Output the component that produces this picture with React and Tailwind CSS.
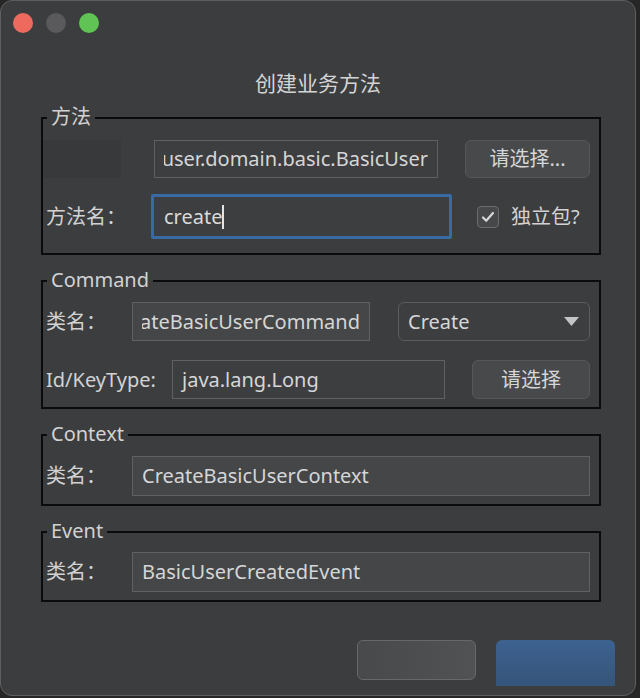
import React from 'react';

const FONT = { fontFamily: '"Noto Sans", "Noto Sans CJK SC", sans-serif' };

function Group({ title, className, children }) {
  return (
    <div className={`relative ml-[40px] w-[560px] border-2 border-[#0b0b0b] ${className}`}>
      <span className="absolute -top-[14px] left-[4px] bg-[#3c3d3f] px-[4px] text-[20px] leading-[24px] text-[#d2d2d2]">
        {title}
      </span>
      {children}
    </div>
  );
}

function Field({ value, className, clip = false }) {
  return (
    <div className={`flex items-center border border-[#5f6163] px-[9px] text-[20px] text-[#d6d6d6] ${className}`}>
      {clip ? (
        <div className="flex min-w-0 flex-1 justify-end overflow-hidden whitespace-nowrap">
          <span>{value}</span>
        </div>
      ) : (
        <span className="whitespace-nowrap">{value}</span>
      )}
    </div>
  );
}

function Button({ children, className }) {
  return (
    <div className={`flex items-center justify-center rounded-[6px] border border-[#55575a] bg-[#47494b] text-[20px] text-[#d6d6d6] ${className}`}>
      {children}
    </div>
  );
}

export default function App() {
  return (
    <div className="h-[698px] w-[640px] bg-[#262626]" style={FONT}>
      <div className="flex h-[696px] w-[636px] flex-col overflow-hidden rounded-[12px] border border-[#5e5e5e] bg-[#3c3d3f]">
        {/* traffic lights */}
        <div className="flex gap-[13px] pl-[12px] pt-[12px]">
          <span className="h-[20px] w-[20px] rounded-full bg-[#ee6a5f]" />
          <span className="h-[20px] w-[20px] rounded-full bg-[#5a5a5c]" />
          <span className="h-[20px] w-[20px] rounded-full bg-[#5fc453]" />
        </div>

        <div className="mt-[36px] text-center text-[21px] leading-[28px] text-[#d4d4d4]">创建业务方法</div>

        {/* 方法 */}
        <Group title="方法" className="mt-[20px] pb-[14px] pt-[21px]">
          <div className="flex items-center">
            <div className="h-[38px] w-[78px] bg-[#38393b]" />
            <Field
              clip
              value="com.xxx.user.domain.basic.BasicUser"
              className="ml-[33px] h-[38px] w-[284px] bg-[#3d3e40]"
            />
            <Button className="ml-[27px] h-[38px] w-[125px]">请选择...</Button>
          </div>
          <div className="mt-[16px] flex items-center">
            <div className="ml-[3px] w-[105px] text-[20px] text-[#d2d2d2]">方法名：</div>
            <div className="flex h-[45px] w-[301px] items-center rounded-[2px] border-[3px] border-[#3a6aa3] bg-[#3d3e40] pl-[10px] text-[20px] text-[#dadada]">
              <span>create</span>
              <span className="h-[24px] w-[2px] bg-[#e4e4e4]" />
            </div>
            <div className="ml-[25px] flex h-[22px] w-[22px] items-center justify-center rounded-[4px] border border-[#6a6c6e] bg-[#46484a]">
              <svg width="16" height="16" viewBox="0 0 16 16" fill="none">
                <path d="M3 8.5l3.2 3.3L13 4" stroke="#d8d8d8" strokeWidth="2.2" strokeLinecap="round" strokeLinejoin="round" />
              </svg>
            </div>
            <span className="ml-[12px] text-[20px] text-[#d2d2d2]">独立包?</span>
          </div>
        </Group>

        {/* Command */}
        <Group title="Command" className="mt-[25px] pb-[8px] pt-[20px]">
          <div className="flex items-center">
            <div className="ml-[3px] w-[86px] text-[20px] text-[#d2d2d2]">类名：</div>
            <Field clip value="CreateBasicUserCommand" className="h-[39px] w-[238px] bg-[#444648]" />
            <div className="ml-[28px] flex h-[39px] w-[192px] items-center justify-between rounded-[6px] border border-[#5a5c5e] bg-[#3d3e40] pl-[9px] pr-[10px] text-[20px] text-[#d6d6d6]">
              <span>Create</span>
              <svg width="15" height="9" viewBox="0 0 15 9">
                <path d="M0 0h15L7.5 9z" fill="#c4c4c4" />
              </svg>
            </div>
          </div>
          <div className="mt-[19px] flex items-center">
            <div className="ml-[3px] w-[126px] text-[20px] text-[#d2d2d2]">Id/KeyType:</div>
            <Field value="java.lang.Long" className="h-[39px] w-[273px] bg-[#3d3e40]" />
            <Button className="ml-[27px] h-[39px] w-[118px]">请选择</Button>
          </div>
        </Group>

        {/* Context */}
        <Group title="Context" className="mt-[25px] pb-[8px] pt-[20px]">
          <div className="flex items-center">
            <div className="ml-[3px] w-[86px] text-[20px] text-[#d2d2d2]">类名：</div>
            <Field value="CreateBasicUserContext" className="h-[40px] w-[458px] bg-[#444648]" />
          </div>
        </Group>

        {/* Event */}
        <Group title="Event" className="mt-[25px] pb-[8px] pt-[19px]">
          <div className="flex items-center">
            <div className="ml-[3px] w-[86px] text-[20px] text-[#d2d2d2]">类名：</div>
            <Field value="BasicUserCreatedEvent" className="h-[40px] w-[458px] bg-[#444648]" />
          </div>
        </Group>

        <div className="mt-[38px] flex items-start justify-end gap-[20px] pr-[20px]">
          <div className="h-[40px] w-[119px] rounded-[6px] border border-[#66686a] bg-gradient-to-r from-[#48494b] to-[#505254]" />
          <div className="h-[46px] w-[119px] rounded-t-[6px] bg-gradient-to-b from-[#3d6290] to-[#35547a]" />
        </div>
      </div>
    </div>
  );
}
